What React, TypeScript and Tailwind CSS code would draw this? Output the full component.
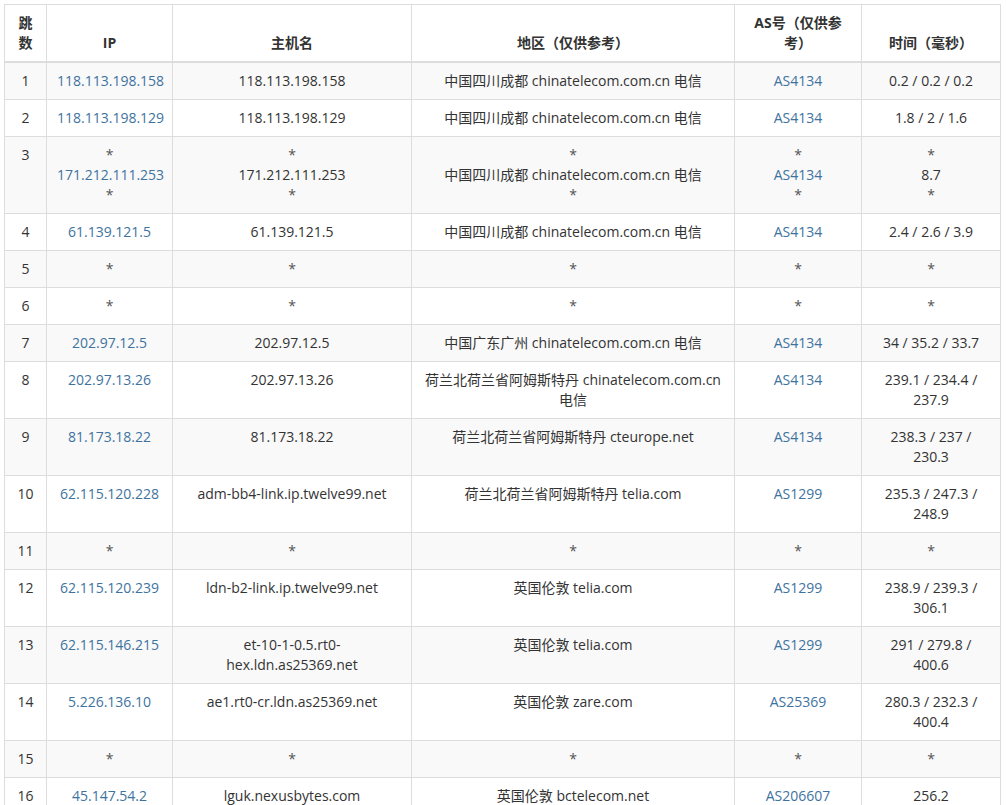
const rows: [string, string[], string[], string[], string[], string[]][] = [
  ["1", ["118.113.198.158"], ["118.113.198.158"], ["中国四川成都 chinatelecom.com.cn 电信"], ["AS4134"], ["0.2 / 0.2 / 0.2"]],
  ["2", ["118.113.198.129"], ["118.113.198.129"], ["中国四川成都 chinatelecom.com.cn 电信"], ["AS4134"], ["1.8 / 2 / 1.6"]],
  ["3", ["*", "171.212.111.253", "*"], ["*", "171.212.111.253", "*"], ["*", "中国四川成都 chinatelecom.com.cn 电信", "*"], ["*", "AS4134", "*"], ["*", "8.7", "*"]],
  ["4", ["61.139.121.5"], ["61.139.121.5"], ["中国四川成都 chinatelecom.com.cn 电信"], ["AS4134"], ["2.4 / 2.6 / 3.9"]],
  ["5", ["*"], ["*"], ["*"], ["*"], ["*"]],
  ["6", ["*"], ["*"], ["*"], ["*"], ["*"]],
  ["7", ["202.97.12.5"], ["202.97.12.5"], ["中国广东广州 chinatelecom.com.cn 电信"], ["AS4134"], ["34 / 35.2 / 33.7"]],
  ["8", ["202.97.13.26"], ["202.97.13.26"], ["荷兰北荷兰省阿姆斯特丹 chinatelecom.com.cn 电信"], ["AS4134"], ["239.1 / 234.4 / 237.9"]],
  ["9", ["81.173.18.22"], ["81.173.18.22"], ["荷兰北荷兰省阿姆斯特丹 cteurope.net"], ["AS4134"], ["238.3 / 237 / 230.3"]],
  ["10", ["62.115.120.228"], ["adm-bb4-link.ip.twelve99.net"], ["荷兰北荷兰省阿姆斯特丹 telia.com"], ["AS1299"], ["235.3 / 247.3 / 248.9"]],
  ["11", ["*"], ["*"], ["*"], ["*"], ["*"]],
  ["12", ["62.115.120.239"], ["ldn-b2-link.ip.twelve99.net"], ["英国伦敦 telia.com"], ["AS1299"], ["238.9 / 239.3 / 306.1"]],
  ["13", ["62.115.146.215"], ["et-10-1-0.5.rt0-hex.ldn.as25369.net"], ["英国伦敦 telia.com"], ["AS1299"], ["291 / 279.8 / 400.6"]],
  ["14", ["5.226.136.10"], ["ae1.rt0-cr.ldn.as25369.net"], ["英国伦敦 zare.com"], ["AS25369"], ["280.3 / 232.3 / 400.4"]],
  ["15", ["*"], ["*"], ["*"], ["*"], ["*"]],
  ["16", ["45.147.54.2"], ["lguk.nexusbytes.com"], ["英国伦敦 bctelecom.net"], ["AS206607"], ["256.2"]],
];

const Lines = ({ items, link }: { items: string[]; link?: boolean }) => (
  <>
    {items.map((t, i) => (
      <div key={i} className={t === "*" ? "text-[#555]" : link ? "text-[#3e73a0]" : ""}>
        {t}
      </div>
    ))}
  </>
);

const td = "border border-[#ddd] px-[10px] py-2 align-top text-center";
const th = "border border-[#ddd] border-b-2 px-[10px] py-2 align-bottom";

export default function App() {
  return (
    <div className="p-1 bg-white min-h-screen" style={{ fontFamily: '"Open Sans", "Noto Sans CJK SC", sans-serif' }}>
      <table className="w-[996px] table-fixed border-collapse text-[14px] leading-[20px] text-[#333]">
        <colgroup>
          <col className="w-[42px]" />
          <col className="w-[126px]" />
          <col className="w-[239px]" />
          <col className="w-[323px]" />
          <col className="w-[127px]" />
          <col className="w-[139px]" />
        </colgroup>
        <thead>
          <tr className="font-bold">
            <th className="border border-[#ddd] border-b-2 px-2 py-2 align-bottom">跳数</th>
            <th className={th}>IP</th>
            <th className={th}>主机名</th>
            <th className={th}>地区（仅供参考）</th>
            <th className={th}>AS号（仅供参考）</th>
            <th className={th}>时间（毫秒）</th>
          </tr>
        </thead>
        <tbody>
          {rows.map((r, i) => (
            <tr key={r[0]} className={i % 2 === 0 ? "bg-[#f9f9f9]" : "bg-white"}>
              <td className="border border-[#ddd] px-2 py-2 align-top text-center">{r[0]}</td>
              <td className={td}><Lines items={r[1]} link /></td>
              <td className={td}><Lines items={r[2]} /></td>
              <td className={td}><Lines items={r[3]} /></td>
              <td className={td}><Lines items={r[4]} link /></td>
              <td className={td}><Lines items={r[5]} /></td>
            </tr>
          ))}
        </tbody>
      </table>
    </div>
  );
}
